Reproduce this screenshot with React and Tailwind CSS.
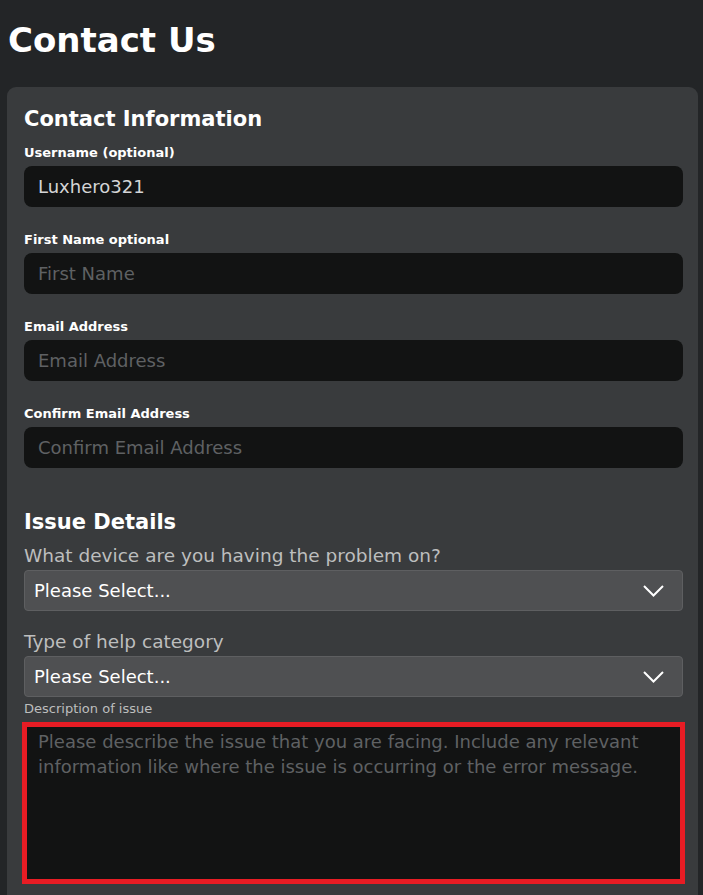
import React from 'react';

// Contact form page: account details + issue details

const font = { fontFamily: '"DejaVu Sans", "Noto Sans", sans-serif' };

function TextField({ label, placeholder, value }) {
  return (
    <div className="flex flex-col">
      <label className="text-[13px] leading-[16px] text-white font-bold mb-[5px]">{label}</label>
      <div className="h-[41px] rounded-[8px] bg-[#121313] flex items-center px-[14px]">
        {value ? (
          <span className="text-[18px] text-[#d4d5d6]">{value}</span>
        ) : (
          <span className="text-[18px] text-[#5f6163]">{placeholder}</span>
        )}
      </div>
    </div>
  );
}

function Chevron() {
  return (
    <svg width="21" height="12" viewBox="0 0 21 12" fill="none">
      <path d="M1 1l9.5 9.5L20 1" stroke="#fff" strokeWidth="2" />
    </svg>
  );
}

function SelectField({ label }) {
  return (
    <div className="flex flex-col">
      <label className="text-[18.5px] leading-[22px] text-[#bdbebe] mb-[3px]">{label}</label>
      <div className="h-[41px] rounded-[4px] bg-[#4f5052] border border-[#5e5f61] flex items-center justify-between pl-[9px] pr-[18px]">
        <span className="text-[18px] text-white">Please Select...</span>
        <Chevron />
      </div>
    </div>
  );
}

export default function App() {
  return (
    <div className="min-h-screen bg-[#232527] pl-[7px] pr-[5px] overflow-hidden" style={font}>
      <h1 className="pl-[1px] pt-[20px] h-[87px] text-[34px] leading-[40px] font-bold text-white">Contact Us</h1>
      <section className="rounded-t-[9px] bg-[#393b3d] pl-[17px] pr-[15px] pt-[17px] pb-[11px]">
        <h2 className="text-[21px] leading-[30px] font-bold text-white mb-[11px]">Contact Information</h2>
        <div className="flex flex-col gap-[25px]">
          <TextField label="Username (optional)" value="Luxhero321" />
          <TextField label="First Name optional" placeholder="First Name" />
          <TextField label="Email Address" placeholder="Email Address" />
          <TextField label="Confirm Email Address" placeholder="Confirm Email Address" />
        </div>
        <h2 className="mt-[39px] text-[21px] leading-[30px] font-bold text-white mb-[8px]">Issue Details</h2>
        <div className="flex flex-col gap-[20px]">
          <SelectField label="What device are you having the problem on?" />
          <SelectField label="Type of help category" />
        </div>
        <label className="block mt-[4px] text-[13px] leading-[16px] text-[#bdbebe] mb-[5px]">Description of issue</label>
        <div className="-mx-[2px] h-[162px] border-[5px] border-[#e81c24] bg-[#121313] px-[11px] pt-[2px]">
          <p className="text-[18px] leading-[25px] text-[#5f6163]">
            Please describe the issue that you are facing. Include any relevant information like where the issue is occurring or the error message.
          </p>
        </div>
      </section>
    </div>
  );
}
